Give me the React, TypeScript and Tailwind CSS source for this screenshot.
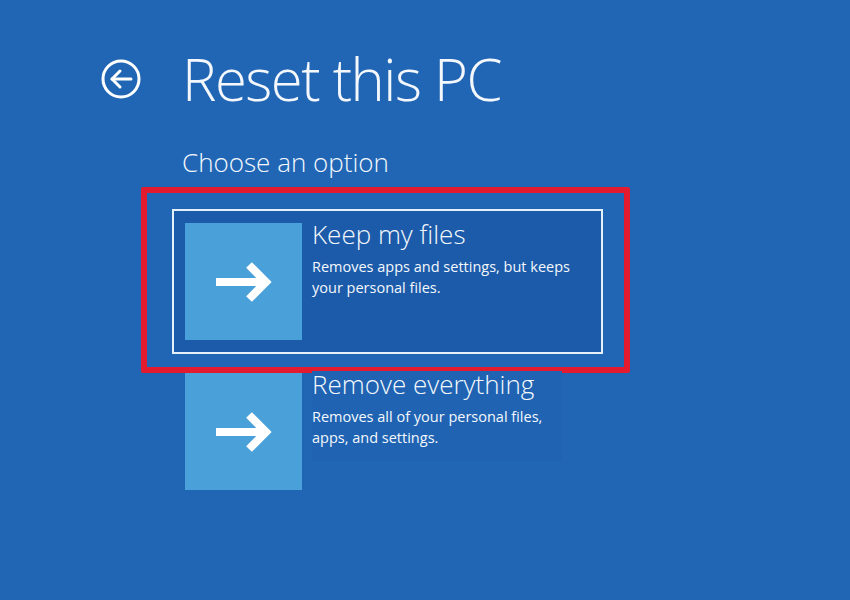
import React from 'react'

type Option = { title: string; lines: string[]; selected?: boolean }

const OPTIONS: Option[] = [
  { title: 'Keep my files', lines: ['Removes apps and settings, but keeps', 'your personal files.'], selected: true },
  { title: 'Remove everything', lines: ['Removes all of your personal files,', 'apps, and settings.'] },
]

function BackIcon() {
  return (
    <svg width="40" height="40" viewBox="0 0 40 40" fill="none" stroke="white" strokeWidth="3">
      <circle cx="20" cy="20" r="18" />
      <path d="M11 20 H30" strokeLinecap="round" />
      <path d="M19 12 L11 20 L19 28" strokeLinecap="round" strokeLinejoin="round" />
    </svg>
  )
}

function TileArrow() {
  return (
    <svg width="60" height="44" viewBox="0 0 60 44" fill="none" stroke="white" strokeWidth="8">
      <path d="M2 22 H52" />
      <path d="M35 5 L52 22 L35 39" strokeLinejoin="miter" />
    </svg>
  )
}

function OptionRow({ opt }: { opt: Option }) {
  return (
    <div
      className={
        'relative flex w-[431px] h-[145px] border-2 pl-[11px] pt-[12px] ' +
        (opt.selected ? 'border-[#e6f0fa] bg-[#1c5ba9]' : 'border-transparent')
      }
    >
      <div className="flex items-center justify-center w-[117px] h-[117px] shrink-0 bg-[#4aa0d9]">
        <TileArrow />
      </div>
      <div className={'ml-[10px] mt-[-2px] pr-2 h-[90px] ' + (opt.selected ? '' : 'bg-[#1f63b2] w-[250px]')}>
        <p className="text-[26px] leading-[26px] font-light">{opt.title}</p>
        <p className="mt-[9px] text-[14.5px] leading-[21px]">
          {opt.lines[0]}
          <br />
          {opt.lines[1]}
        </p>
      </div>
      {opt.selected && (
        <div className="absolute left-[-33px] top-[-24px] right-[-29px] bottom-[-21px] border-[6px] border-[#e31b2e] rounded-[2px] pointer-events-none" />
      )}
    </div>
  )
}

export default function App() {
  return (
    <div
      className="w-[850px] h-[600px] overflow-hidden bg-[#2166b5] text-[#f4f8fc]"
      style={{ fontFamily: '"Open Sans", "Noto Sans", sans-serif' }}
    >
      <div className="flex items-center pl-[101px] pt-[49px] h-[109px]">
        <BackIcon />
        <h1 className="ml-[41px] text-[58px] leading-[60px] font-light tracking-[-1.5px]">Reset this PC</h1>
      </div>
      <p className="ml-[182px] mt-[38px] text-[26px] leading-[30px] font-light">Choose an option</p>
      <div className="ml-[172px] mt-[32px] flex flex-col gap-[5px]">
        {OPTIONS.map((o) => (
          <OptionRow key={o.title} opt={o} />
        ))}
      </div>
    </div>
  )
}
